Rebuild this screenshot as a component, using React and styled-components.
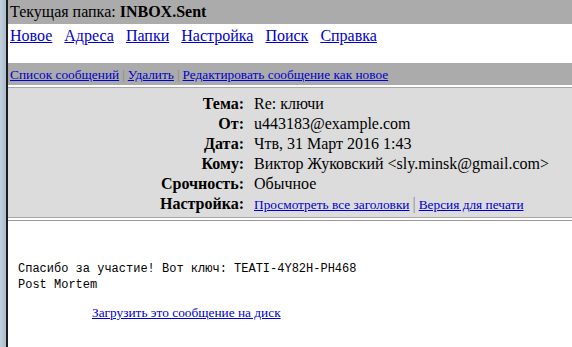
import React from "react";
import styled, { createGlobalStyle } from "styled-components";

const GlobalStyle = createGlobalStyle`
  body {
    margin: 0;
    background: #fff;
    font-family: "Liberation Serif", "Times New Roman", serif;
    color: #000;
  }
`;

const Frame = styled.div`
  display: flex;
  height: 347px;
  overflow: hidden;
`;

const Edge = styled.div`
  width: 6px;
  flex-shrink: 0;
  background: linear-gradient(to right, #c3d0dc, #a9bccd);
  border-right: 2px solid #1c1c1c;
`;

const Main = styled.div`
  flex: 1;
  display: flex;
  flex-direction: column;
`;

const TitleBar = styled.div`
  height: 24px;
  background: #ababab;
  padding-left: 2px;
  font-size: 16px;
  line-height: 24px;
  b {
    font-weight: bold;
  }
`;

const Nav = styled.div`
  display: flex;
  gap: 12px;
  padding: 2px 2px 0;
  height: 37px;
  font-size: 16px;
  line-height: 20px;
`;

const Link = styled.a`
  color: #0000cc;
  text-decoration: underline;
  font-size: ${(p) => p.$size || 16}px;
`;

const ActionBar = styled.div`
  height: 22px;
  background: #ababab;
  padding-left: 2px;
  font-size: 13.33px;
  line-height: 24px;
`;

const Sep = styled.span`
  color: #8a8a8a;
  margin: 0 3px;
`;

const HeaderBox = styled.div`
  margin-top: 2px;
  background: #dcdcdc;
  border-top: 1px solid #a6a6a6;
  border-bottom: 1px solid #a6a6a6;
  padding: 6px 0 2px;
  display: grid;
  grid-template-columns: 236px 1fr;
  column-gap: 10px;
  font-size: 16px;
  line-height: 20px;
`;

const Label = styled.div`
  text-align: right;
  font-weight: bold;
`;

const Value = styled.div`
  white-space: nowrap;
`;

const Rule = styled.div`
  margin-top: 2px;
  border-top: 1px solid #9a9a9a;
`;

const Body = styled.pre`
  margin: 40px 0 0 10px;
  font-family: "Liberation Mono", "Courier New", monospace;
  font-size: 12px;
  line-height: 16px;
`;

const Download = styled.div`
  padding: 10px 0 0 84px;
`;

const headers = [
  ["Тема:", "Re: ключи"],
  ["От:", "u443183@example.com"],
  ["Дата:", "Чтв, 31 Март 2016 1:43"],
  ["Кому:", "Виктор Жуковский <sly.minsk@gmail.com>"],
  ["Срочность:", "Обычное"],
];

export default function App() {
  return (
    <>
      <GlobalStyle />
      <Frame>
        <Edge />
        <Main>
          <TitleBar>
            Текущая папка: <b>INBOX.Sent</b>
          </TitleBar>
          <Nav>
            <Link href="#">Новое</Link>
            <Link href="#">Адреса</Link>
            <Link href="#">Папки</Link>
            <Link href="#">Настройка</Link>
            <Link href="#">Поиск</Link>
            <Link href="#">Справка</Link>
          </Nav>
          <ActionBar>
            <Link href="#" $size={13.33}>Список сообщений</Link>
            <Sep>|</Sep>
            <Link href="#" $size={13.33}>Удалить</Link>
            <Sep>|</Sep>
            <Link href="#" $size={13.33}>Редактировать сообщение как новое</Link>
          </ActionBar>
          <HeaderBox>
            {headers.map(([k, v]) => (
              <React.Fragment key={k}>
                <Label>{k}</Label>
                <Value>{v}</Value>
              </React.Fragment>
            ))}
            <Label>Настройка:</Label>
            <Value>
              <Link href="#" $size={13.33}>Просмотреть все заголовки</Link>
              <Sep>|</Sep>
              <Link href="#" $size={13.33}>Версия для печати</Link>
            </Value>
          </HeaderBox>
          <Rule />
          <Body>
            {"Спасибо за участие! Вот ключ: TEATI-4Y82H-PH468\nPost Mortem"}
          </Body>
          <Download>
            <Link href="#" $size={13.33}>Загрузить это сообщение на диск</Link>
          </Download>
        </Main>
      </Frame>
    </>
  );
}
